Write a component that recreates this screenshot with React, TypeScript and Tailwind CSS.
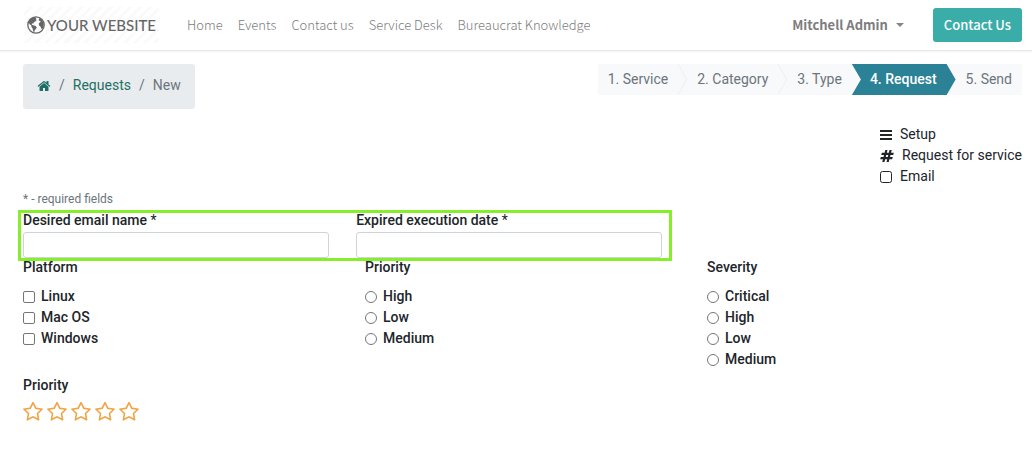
import { useState } from "react";

/* ── Icons ───────────────────────────────────────────────────── */

type IconProps = { className?: string };

function HomeIcon({ className }: IconProps) {
  return (
    <svg viewBox="0 0 1792 1792" fill="currentColor" className={className} aria-hidden="true">
      <path d="M1472 992v480q0 26-19 45t-45 19h-384v-384h-256v384h-384q-26 0-45-19t-19-45v-480q0-1 .5-3t.5-3l575-474 575 474q1 2 1 6zm223-69l-62 74q-8 9-21 11h-3q-13 0-21-7l-692-577-692 577q-12 8-24 7-13-2-21-11l-62-74q-8-10-7-23.500t11-21.500l719-599q32-26 76-26t76 26l244 204v-195q0-14 9-23t23-9h192q14 0 23 9t9 23v408l219 182q10 8 11 21.500t-7 23.500z" />
    </svg>
  );
}

function HashIcon({ className }: IconProps) {
  return (
    <svg viewBox="0 0 1792 1792" fill="currentColor" className={className} aria-hidden="true">
      <path d="M991 1024l64-256h-254l-64 256h254zm768-504l-56 224q-7 24-31 24h-327l-64 256h311q15 0 25 12 10 14 6 28l-56 224q-5 24-31 24h-327l-81 328q-7 24-31 24h-224q-16 0-26-12-9-12-6-28l78-312h-254l-81 328q-7 24-31 24h-225q-15 0-25-12-9-12-6-28l78-312h-311q-15 0-25-12-9-12-6-28l56-224q7-24 31-24h327l64-256h-311q-15 0-25-12-10-14-6-28l56-224q5-24 31-24h327l81-328q7-24 32-24h224q15 0 25 12 9 12 6 28l-78 312h254l81-328q7-24 32-24h224q15 0 25 12 9 12 6 28l-78 312h311q15 0 25 12 9 12 6 28z" />
    </svg>
  );
}

function StarIcon({ className, filled }: IconProps & { filled: boolean }) {
  return (
    <svg viewBox="64 64 1664 1664" fill="currentColor" className={className} aria-hidden="true">
      {filled && <path d="M896 263l189 382 422 62-306 297 73 421-378-199-378 199 73-421-306-297 422-62z" />}
      <path d="M1201 1004l306-297-422-62-189-382-189 382-422 62 306 297-73 421 378-199 377 199zm527-357q0 22-26 48l-363 354 86 500q1 7 1 20 0 50-41 50-19 0-40-12l-449-236-449 236q-22 12-40 12-21 0-31.500-14.500t-10.500-35.500q0-6 2-20l86-500-364-354q-25-27-25-48 0-37 56-46l502-73 225-455q19-41 49-41t49 41l225 455 502 73q56 9 56 46z" />
    </svg>
  );
}

function GlobeIcon({ className }: IconProps) {
  return (
    <svg viewBox="0 0 18 18" className={className} aria-hidden="true">
      <circle cx="9" cy="9" r="8.200" fill="none" stroke="currentColor" strokeWidth="1.300" />
      <path
        fill="currentColor"
        d="M1.500 6L4 2.500 7.500 1 9.500 2 8.700 3.200 9.800 4 8.500 5.300 7 6.200 6.300 7.600 5 7.400 4.700 8.500 6 9.300 8.300 9.800 9.800 11.200 9 13 7.800 14 7.300 16 6.200 15.600 5.700 12.800 4.500 11 4.300 9.600 2.500 8.300zM12 2L14.500 3.600 16.400 6.500 16.800 9.500 15.800 12.500 14.600 13.200 13.800 11 12.300 9.800 11.700 7.800 12.800 6.200 14 5.800 12.600 4.900 11.800 4.200z"
      />
    </svg>
  );
}

function BarsIcon({ className }: IconProps) {
  return (
    <svg viewBox="0 0 12 12" fill="currentColor" className={className} aria-hidden="true">
      <path d="M0 1h12v2H0zM0 5h12v2H0zM0 9h12v2H0z" />
    </svg>
  );
}

function SquareIcon({ className }: IconProps) {
  return (
    <svg viewBox="0 0 12 12" fill="none" stroke="currentColor" className={className} aria-hidden="true">
      <rect x="0.500" y="0.500" width="11" height="11" rx="2" />
    </svg>
  );
}

/* ── Header ──────────────────────────────────────────────────── */

const menu = ["Home", "Events", "Contact us", "Service Desk", "Bureaucrat Knowledge"];

function Header() {
  return (
    <header className="flex h-[51px] items-center border-b border-[#e9e9e9] pb-px pl-6 pr-[10px] font-['Noto_Sans_CJK_SC',sans-serif] text-[13px] leading-5 text-[#7d7d7d] shadow-[0_1px_1px_rgba(0,0,0,0.04)]">
      <a
        href="#"
        className="flex h-9 items-center gap-[2px] bg-[repeating-linear-gradient(135deg,#fff_0px,#fff_4px,#fafafa_4px,#fafafa_7px)] px-[3px] font-[Lato,sans-serif] text-[15px] font-medium text-[#666]"
      >
        <GlobeIcon className="size-[18px]" />
        YOUR WEBSITE
      </a>
      <nav className="ml-7 flex gap-[15px] font-light">
        {menu.map((item) => (
          <a key={item} href="#" className="whitespace-nowrap">
            {item}
          </a>
        ))}
      </nav>
      <button className="ml-auto flex items-center gap-2 font-bold">
        Mitchell Admin
        <span className="border-x-4 border-t-4 border-x-transparent border-t-[#858585]" />
      </button>
      <a href="#" className="ml-[29px] rounded-[3px] bg-[#3aada8] px-[11px] py-[7px] font-medium text-white">
        Contact Us
      </a>
    </header>
  );
}

/* ── Breadcrumb and wizard steps ─────────────────────────────── */

function Breadcrumb() {
  return (
    <nav aria-label="Breadcrumb" className="flex h-[45px] items-center gap-2 rounded-[3px] bg-[#e9ecef] px-[14px] pb-[2px] text-[#6c757d]">
      <a href="#" aria-label="Home" className="text-[#1f6f64]">
        <HomeIcon className="size-[14px]" />
      </a>
      <span>/</span>
      <a href="#" className="text-[#1f6f64]">Requests</a>
      <span>/</span>
      <span>New</span>
    </nav>
  );
}

const steps = ["1. Service", "2. Category", "3. Type", "4. Request", "5. Send"];
const currentStep = 3;

function Steps() {
  return (
    <ol className="flex h-[31px] bg-[#f8f9fa] text-[#6c757d]">
      {steps.map((step, i) =>
        i === currentStep ? (
          <li
            key={step}
            aria-current="step"
            className="flex items-center bg-[#2b8196] pl-[18px] pr-[19px] font-medium text-white [clip-path:polygon(0_0,calc(100%-9px)_0,100%_50%,calc(100%-9px)_100%,0_100%,9px_50%)]"
          >
            {step}
          </li>
        ) : (
          <li key={step} className="flex items-center pl-[10px]">
            <span className="pr-[10px]">{step}</span>
            {i < currentStep - 1 && (
              <svg viewBox="0 0 9 31" className="h-[31px] w-[9px]" fill="none" stroke="#eceff1" aria-hidden="true">
                <path d="M0 0l8.500 15.500L0 31" />
              </svg>
            )}
          </li>
        )
      )}
    </ol>
  );
}

/* ── Form parts ──────────────────────────────────────────────── */

function TextField({ id, label }: { id: string; label: string }) {
  return (
    <div className="flex-1">
      <label htmlFor={id} className="block font-medium leading-[15px]">
        {label} <span className="font-normal">*</span>
      </label>
      <input id={id} type="text" required className="mt-1 block h-[26px] w-full rounded-[3px] border border-[#ced4da] px-2" />
    </div>
  );
}

type ChoicesProps = { title: string; name: string; type: "checkbox" | "radio"; options: string[] };

function Choices({ title, name, type, options }: ChoicesProps) {
  return (
    <fieldset className="font-medium">
      <legend className="mb-2">{title}</legend>
      {options.map((option) => (
        <label key={option} className="flex items-center gap-[6px]">
          <input
            type={type}
            name={name}
            className={
              type === "radio"
                ? "size-3 appearance-none rounded-full border border-[#767676] checked:bg-[#2b8196]"
                : "size-3 appearance-none rounded-[2px] border border-[#767676] checked:bg-[#2b8196]"
            }
          />
          {option}
        </label>
      ))}
    </fieldset>
  );
}

function Rating() {
  const [value, setValue] = useState(0);

  return (
    <section>
      <h2 className="font-medium">Priority</h2>
      <div className="mt-[6px] flex gap-1 text-[#f0a340]">
        {[1, 2, 3, 4, 5].map((n) => (
          <button key={n} type="button" aria-label={`${n} of 5`} onClick={() => setValue(n)}>
            <StarIcon className="size-5" filled={n <= value} />
          </button>
        ))}
      </div>
    </section>
  );
}

export default function App() {
  return (
    <div className="bg-white font-[Roboto,sans-serif] text-sm leading-[21px] text-[#212529]">
      <Header />
      <main className="pl-[23px] pr-[10px] pt-[13px]">
        <div className="flex items-start justify-between">
          <Breadcrumb />
          <Steps />
        </div>

        <ul className="ml-auto mt-[15px] w-fit">
          <li className="flex items-center gap-2">
            <BarsIcon className="size-3" />
            Setup
          </li>
          <li className="flex items-center gap-2">
            <HashIcon className="size-[14px]" />
            Request for service
          </li>
          <li className="flex items-center gap-2">
            <SquareIcon className="size-3" />
            Email
          </li>
        </ul>

        <form>
          <p className="mt-1 text-xs leading-4 text-[#6c757d]">* - required fields</p>
          <div className="-ml-[5px] mt-[3px] flex w-[65.500%] gap-[27px] border-[3px] border-[#86ee2a] pl-[2px] pr-[7px]">
            <TextField id="email-name" label="Desired email name" />
            <TextField id="execution-date" label="Expired execution date" />
          </div>
          <div className="-mt-1 grid grid-cols-[342fr_342fr_315fr] items-start">
            <Choices title="Platform" name="platform" type="checkbox" options={["Linux", "Mac OS", "Windows"]} />
            <Choices title="Priority" name="priority" type="radio" options={["High", "Low", "Medium"]} />
            <Choices title="Severity" name="severity" type="radio" options={["Critical", "High", "Low", "Medium"]} />
          </div>
          <div className="mt-[5px]">
            <Rating />
          </div>
        </form>
      </main>
    </div>
  );
}
